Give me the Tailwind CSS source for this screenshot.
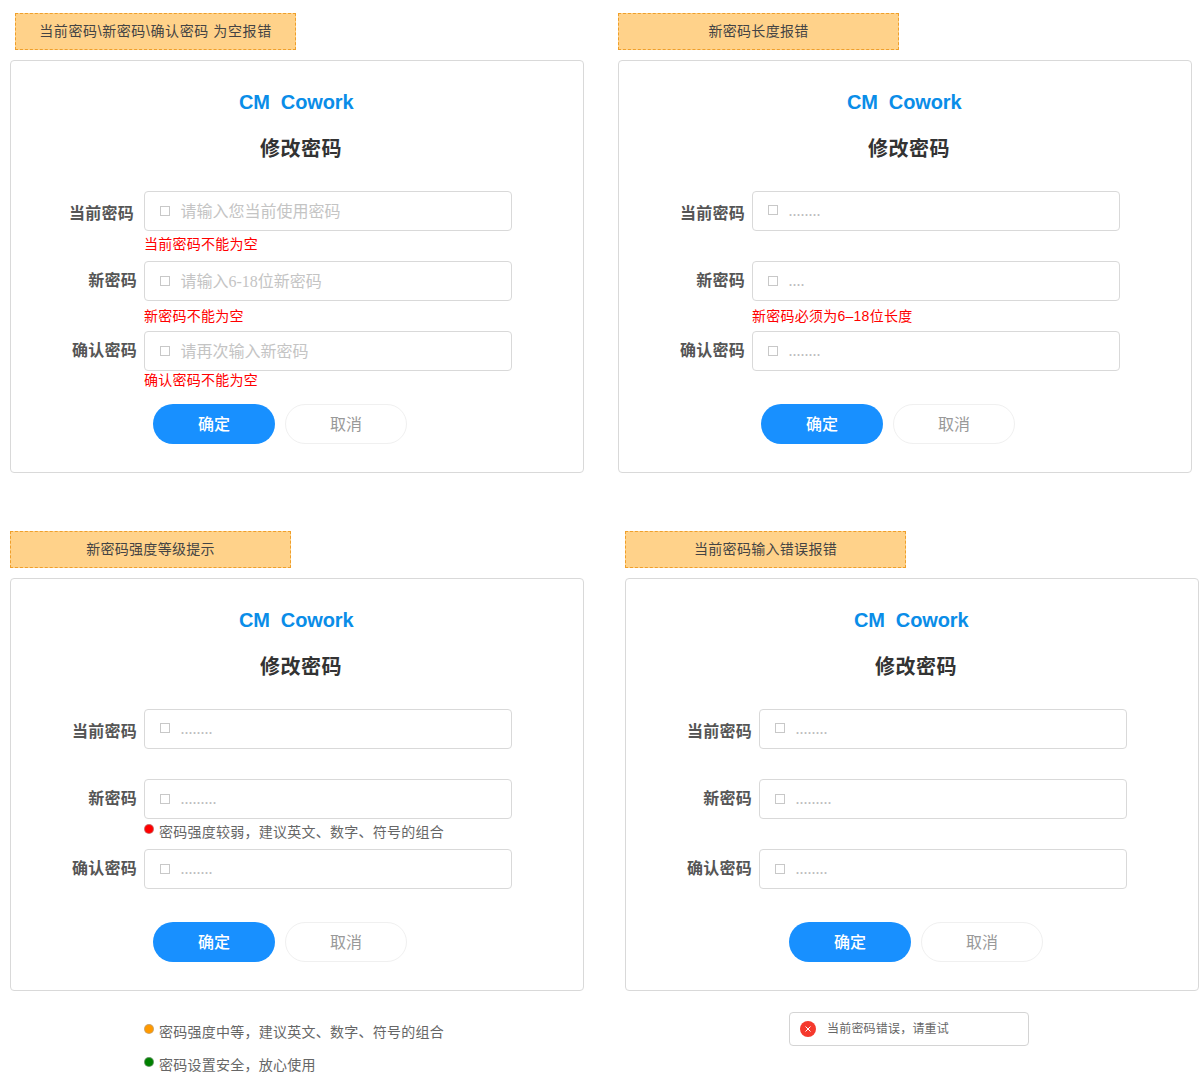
<!DOCTYPE html>
<html lang="zh-CN">
<head>
  <meta charset="UTF-8"/>
  <title>修改密码</title>
  <script src="https://cdn.jsdelivr.net/npm/@tailwindcss/browser@4"></script>
</head>
<body class="bg-white text-[#333] font-['Liberation_Sans','Noto_Sans_CJK_SC',sans-serif]">
  <div id="page" class="w-[1201px] h-[1087px] overflow-hidden pt-[13px]">
    <div class="flex">
      <div id="p1" class="w-[574px] ml-[10px]"></div>
      <div id="p2" class="w-[574px] ml-[34px]"></div>
    </div>
    <div class="flex mt-[58px]">
      <div class="w-[574px] ml-[10px]">
        <div id="p3"></div>
        <!-- other strength levels -->
        <div class="ml-[134px] mt-[32px] flex flex-col gap-[15px]">
          <div class="flex items-start gap-[5px] text-sm leading-[18px] tracking-[0.25px] text-[#666]">
            <span class="w-[10px] h-[10px] mt-[1px] rounded-full bg-[#f90] border border-[#aaa]/60"></span>
            <span>密码强度中等，建议英文、数字、符号的组合</span>
          </div>
          <div class="flex items-start gap-[5px] text-sm leading-[18px] tracking-[0.25px] text-[#666]">
            <span class="w-[10px] h-[10px] mt-[1px] rounded-full bg-[#008000] border border-[#aaa]/60"></span>
            <span>密码设置安全，放心使用</span>
          </div>
        </div>
      </div>
      <div class="w-[574px] ml-[41px]">
        <div id="p4"></div>
        <div class="ml-[164px] mt-[21px] w-[240px] h-[34px] flex items-center border border-[#d4d4d4] rounded-[4px] pl-[10px]">
          <svg width="16" height="16" viewBox="0 0 16 16">
            <circle cx="8" cy="8" r="8" fill="#f5392d"/>
            <path d="M5.5 5.5l5 5M10.5 5.5l-5 5" stroke="#fff" stroke-width="1" fill="none"/>
          </svg>
          <span class="ml-[11px] text-xs tracking-[0.2px] text-[#666]">当前密码错误，请重试</span>
        </div>
      </div>
    </div>
  </div>

  <script>
    const serif = "font-['Liberation_Serif','Noto_Sans_CJK_SC',serif]";

    function input(label, text, isDots, labelCls, iconCls) {
      const value = isDots
        ? `<span class="${serif} text-base text-[#bbb] leading-none">${text}</span>`
        : `<span class="${serif} text-base text-[#c4c4c4] pt-[2px]">${text}</span>`;
      return `
        <div class="flex h-10 gap-[7px]">
          <label class="w-[126px] text-right text-base font-bold tracking-[0.25px] text-[#555] leading-10 ${labelCls}">${label}</label>
          <div class="w-[368px] h-10 border border-[#d9d9d9] rounded-[4px] flex items-center pl-[15px]">
            <span class="w-[10px] h-[10px] border-[1.5px] border-[#c8c8c8] ${iconCls}"></span>
            <span class="w-[10.5px]"></span>
            ${value}
          </div>
        </div>`;
    }

    function err(text, cls) {
      return `<p class="ml-[133px] text-sm leading-[18px] tracking-[0.25px] text-[#f00] ${cls}">${text}</p>`;
    }

    function card(o) {
      return `
        <div class="w-[281px] h-[37px] pb-[2px] flex items-center justify-center bg-[#ffd28a] border border-dashed border-[#ef9f2a] text-sm text-[#444] ${o.noteCls}">${o.note}</div>
        <div class="w-[574px] h-[413px] mt-[10px] border border-[#d9d9d9] rounded-[4px]">
          <div class="ml-[228px] mt-[27px] text-xl font-bold leading-7 tracking-[-0.1px] text-[#0a8de8] whitespace-pre">CM  Cowork</div>
          <h2 class="mt-[19px] -mb-[1px] ml-[249px] text-xl font-bold leading-7 tracking-[0.5px] text-[#333]">修改密码</h2>
          <div class="mt-[29px]">
            ${input('当前密码', o.f[0], o.dots, o.firstLabel, o.dots ? '-mt-[2px]' : '')}
            <div class="h-[30px]">${o.m[0]}</div>
            ${input('新密码', o.f[1], o.dots, '', '')}
            <div class="h-[30px]">${o.m[1]}</div>
            ${input('确认密码', o.f[2], o.dots, 'leading-[39px]', '')}
            <div class="h-[33px]">${o.m[2]}</div>
          </div>
          <div class="flex gap-[10px] ${o.btnCls}">
            <button class="w-[122px] h-10 pt-[2px] rounded-full bg-[#1890ff] text-white text-base font-medium">确定</button>
            <button class="w-[122px] h-10 pt-[2px] rounded-full border border-[#f0f0f0] text-[#999] text-base">取消</button>
          </div>
        </div>`;
    }

    const weak = `<div class="ml-[133px] pt-[4px] flex items-start gap-[5px] text-sm leading-[18px] tracking-[0.25px] text-[#666]">
        <span class="w-[10px] h-[10px] mt-[1px] rounded-full bg-[#f00] border border-[#aaa]/60"></span>
        <span>密码强度较弱，建议英文、数字、符号的组合</span>
      </div>`;

    document.getElementById('p1').innerHTML = card({
      note: '<span class="tracking-[0.6px]">当前密码\\新密码\\确认密码 为空报错</span>', noteCls: 'ml-[5px]',
      f: ['请输入您当前使用密码', '请输入6-18位新密码', '请再次输入新密码'], dots: false,
      firstLabel: 'pr-[3px] pt-[3px]', btnCls: 'ml-[142px]',
      m: [err('当前密码不能为空', 'pt-[4px]'), err('新密码不能为空', 'pt-[6px]'), err('确认密码不能为空', '')]
    });
    document.getElementById('p2').innerHTML = card({
      note: '<span class="tracking-[0.3px]">新密码长度报错</span>', noteCls: '',
      f: ['........', '....', '........'], dots: true,
      firstLabel: 'pt-[3px]', btnCls: 'ml-[142px]',
      m: ['', err('新密码必须为6–18位长度', 'pt-[6px]'), '']
    });
    document.getElementById('p3').innerHTML = card({
      note: '<span class="tracking-[0.3px]">新密码强度等级提示</span>', noteCls: '',
      f: ['........', '.........', '........'], dots: true,
      firstLabel: 'pt-[3px]', btnCls: 'ml-[142px]',
      m: ['', weak, '']
    });
    document.getElementById('p4').innerHTML = card({
      note: '<span class="tracking-[0.3px]">当前密码输入错误报错</span>', noteCls: '',
      f: ['........', '.........', '........'], dots: true,
      firstLabel: 'pt-[3px]', btnCls: 'ml-[163px]',
      m: ['', '', '']
    });
  </script>
</body>
</html>
